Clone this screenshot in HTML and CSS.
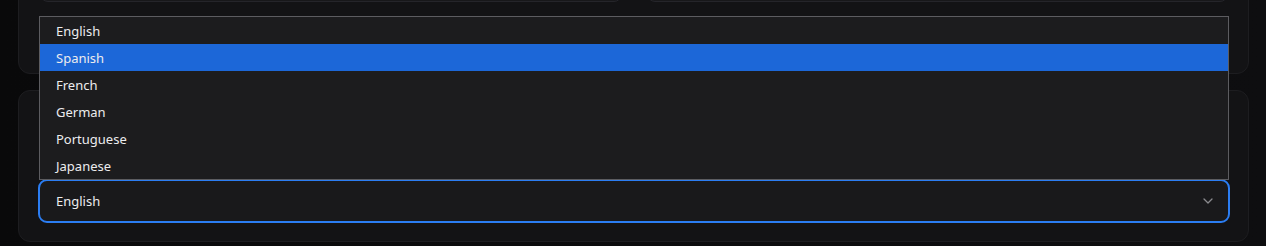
FILE: index.html
```html
<!DOCTYPE html>
<html lang="en">
<head>
    <meta charset="UTF-8">
    <meta name="viewport" content="width=device-width, initial-scale=1.0">
    <title>Settings</title>
    <link rel="stylesheet" href="styles.css">
</head>
<body>
    <div class="page">
        <!-- Carte du haut (coupée) -->
        <div class="card card-top">
            <div class="input-row">
                <div class="input-box"></div>
                <div class="input-box"></div>
            </div>
        </div>

        <!-- Carte langue -->
        <div class="card card-lang">
            <div class="field">
                <ul class="options">
                    <li>English</li>
                    <li class="selected">Spanish</li>
                    <li>French</li>
                    <li>German</li>
                    <li>Portuguese</li>
                    <li>Japanese</li>
                </ul>
                <div class="select">
                    <span>English</span>
                    <svg class="chevron" width="10" height="6" viewBox="0 0 10 6">
                        <path d="M1 1l4 4 4-4" fill="none" stroke="#8a8a8e" stroke-width="1.3" stroke-linecap="round" stroke-linejoin="round"/>
                    </svg>
                </div>
            </div>
        </div>
    </div>
</body>
</html>
```

FILE: styles.css
```css
body {
    margin: 0;
    padding: 0;
    background: linear-gradient(90deg, #09090a 0%, #0e0e10 100%);
    font-family: "Noto Sans", "Segoe UI", Arial, sans-serif;
    font-size: 13px;
    color: #ececee;
    overflow: hidden;
}
.page {
    padding: 0 17px 0 18px;
    margin-top: -60px;
    display: flex;
    flex-direction: column;
    gap: 16px;
}
.card {
    background: #131315;
    border: 1px solid #1d1d20;
    border-radius: 12px;
}
.card-top {
    padding: 19px 20px 71px 21px;
}
.input-row {
    display: grid;
    grid-template-columns: 1fr 1fr;
    gap: 25px;
}
.input-box {
    height: 40px;
    background: #18181a;
    border: 1px solid #25252a;
    border-radius: 8px;
}
.card-lang {
    padding: 88px 18px 18px 19px;
}
.field {
    position: relative;
}
.select {
    height: 40px;
    display: flex;
    align-items: center;
    justify-content: space-between;
    padding: 0 15px 0 16px;
    background: #19191b;
    border: 2px solid #2b7df2;
    border-radius: 9px;
}
.chevron {
    display: block;
}
.options {
    position: absolute;
    left: 1px;
    right: 1px;
    bottom: calc(100% - 1px);
    margin: 0;
    padding: 0;
    list-style: none;
    background: #1c1c1e;
    border: 1px solid #5c5c60;
}
.options li {
    height: 27px;
    line-height: 29px;
    padding-left: 16px;
}
.options li.selected {
    background: #1c67d8;
}
```
